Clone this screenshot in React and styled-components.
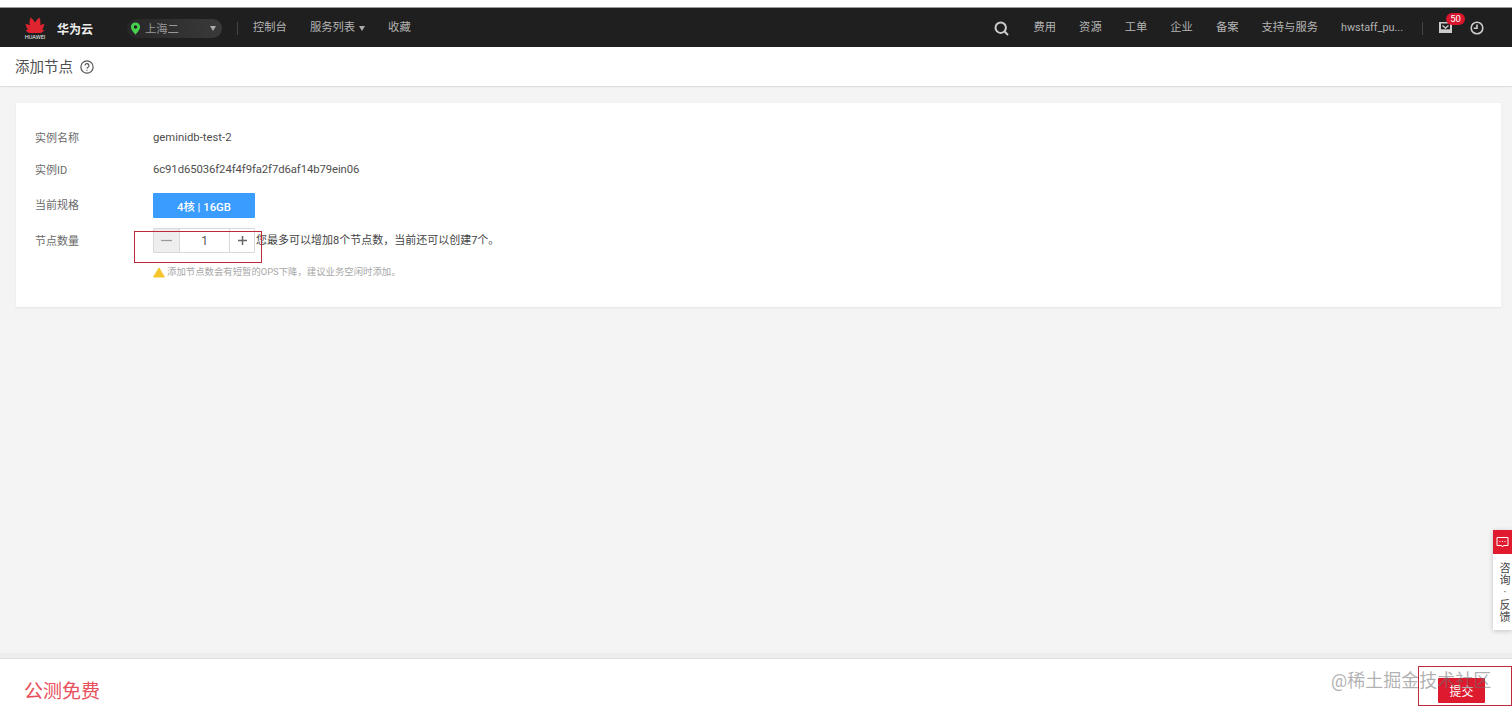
import React from "react";
import styled, { createGlobalStyle } from "styled-components";

const Global = createGlobalStyle`
  html, body { margin: 0; padding: 0; background: #fff; }
  body { font-family: Roboto, "Noto Sans CJK SC", "Liberation Sans", sans-serif; overflow: hidden; }
  * { box-sizing: border-box; }
`;
const Page = styled.div`
  position: relative; width: 1512px; height: 712px; display: flex; flex-direction: column; overflow: hidden; background: #f4f4f4;
`;
const TopStrip = styled.div`height: 8px; background: #fff; border-bottom: 1px solid #9a9a9a;`;
const Header = styled.header`
  height: 39px; background: #1f1f1f; display: flex; align-items: center; padding: 1px 28px 0 24px; color: #b4b4b4; font-size: 12px;
`;
const Brand = styled.div`display: flex; align-items: center; gap: 11px; width: 103px; color: #eee;`;
const LogoBox = styled.div`display: flex; flex-direction: column; align-items: center; width: 22px;`;
const LogoText = styled.span`font-size: 5.6px; line-height: 6px; color: #eee; margin-top: 1px; white-space: nowrap;`;
const BrandName = styled.span`font-size: 12px; font-weight: 700;`;
const Region = styled.div`
  width: 95px; height: 19px; border-radius: 10px; background: linear-gradient(90deg, #272727, #3a3a3a); display: flex; align-items: center; padding: 0 6px 0 3px; gap: 4px; color: #999;
`;
const RegionName = styled.span`flex: 1; font-size: 11.3px;`;
const Caret = styled.span`
  width: 0; height: 0; border-left: 3px solid transparent; border-right: 3px solid transparent; border-top: 5px solid ${p => p.$c || "#aaa"};
`;
const Sep = styled.span`width: 1px; height: 13px; background: #444; margin: ${p => p.$m};`;
const NavItem = styled.span`
  display: flex; align-items: center; gap: 4px; margin-right: ${p => p.$mr || 23}px; white-space: nowrap; font-size: 11.3px; line-height: 14px;
`;
const User = styled.span`margin-right: 19px; white-space: nowrap; font-size: 10.8px; line-height: 14px;`;
const Spacer = styled.div`flex: 1;`;
const IconWrap = styled.span`display: flex; position: relative; margin-right: ${p => p.$mr || 0}px; color: #ccc;`;
const Badge = styled.span`
  position: absolute; left: 7px; top: -9px; width: 19px; height: 12px; border-radius: 6px; background: #d8152d; color: #fff;
  font-size: 9.5px; line-height: 12px; text-align: center;
`;
const SubHeader = styled.div`
  height: 40px; background: #fff; border-bottom: 1px solid #dedede; display: flex; align-items: center; padding: 1px 15px 0; gap: 7px;
  color: #4f4f4f; box-shadow: 0 1px 2px rgba(0,0,0,.03);
`;
const Title = styled.h1`margin: 2px 0 0; font-size: 14.5px; font-weight: 400; line-height: 20px;`;
const Main = styled.main`flex: 1; padding: 16px 11px 0 16px;`;
const Card = styled.section`
  height: 204px; background: #fff; box-shadow: 0 1px 2px rgba(0,0,0,.06); padding: 19px 19px 0; display: flex; flex-direction: column;
`;
const Row = styled.div`display: flex; align-items: center; height: ${p => p.$h}px; margin-top: ${p => p.$mt || 0}px;`;
const Label = styled.span`width: 118px; flex: none; color: #6a6a6a; font-size: 11px; line-height: 16px; padding-top: ${p => p.$pt ?? 2}px;`;
const Value = styled.span`color: #4f4f4f; font-size: 11.3px; line-height: 16px; letter-spacing: ${p => p.$tight ? "-.08px" : "0"};`;
const Spec = styled.div`
  width: 102px; height: 25px; background: #3b9cff; border-radius: 1px; color: #fff; font-size: 11.3px; font-weight: 500;
  display: flex; align-items: center; justify-content: center;
`;
const Stepper = styled.div`width: 102px; height: 25px; border: 1px solid #d8d8d8; display: flex; flex: none; border-radius: 1px;`;
const StepBtn = styled.div`
  width: ${p => p.$w}px; display: flex; align-items: center; justify-content: center; background: ${p => p.$off ? "#eeeeee" : "#fff"}; color: ${p => p.$off ? "#999" : "#666"};
`;
const StepValue = styled.div`
  flex: 1; border-left: 1px solid #d8d8d8; border-right: 1px solid #d8d8d8; display: flex; align-items: center; justify-content: center; color: #555; font-size: 12px; padding-top: 1px;
`;
const Hint = styled.span`margin-left: 1px; color: #444; font-size: 11px; line-height: 16px; white-space: nowrap;`;
const Warn = styled.div`margin: 12px 0 0 118px; display: flex; align-items: center; gap: 2px; color: #a8a8a8; font-size: 9.4px; line-height: 14px;`;
const FooterBand = styled.div`height: 5px; background: #ededed;`;
const Footer = styled.footer`
  height: 54px; background: #fff; border-top: 1px solid #dfdfdf; display: flex; align-items: flex-start; justify-content: space-between; padding: 19px 27px 0 24px;
`;
const Promo = styled.span`color: #e8505b; font-size: 19px; line-height: 26px; padding-top: 1px;`;
const Submit = styled.button`
  width: 47px; height: 25px; border: 0; border-radius: 1px; background: #de1a2e; color: #fff; font: 12px Roboto, "Noto Sans CJK SC", sans-serif; padding: 0;
`;
const Mark = styled.div`position: absolute; border: 1px solid #c0283c; pointer-events: none; left: ${p => p.$l}px; top: ${p => p.$t}px; width: ${p => p.$w}px; height: ${p => p.$h}px;`;
const Watermark = styled.div`
  position: absolute; left: 1331px; top: 669px; color: rgba(110,110,110,.55); font-size: 18px; line-height: 24px; white-space: nowrap; pointer-events: none;
`;
const Float = styled.aside`
  position: absolute; left: 1493px; top: 530px; width: 19px; height: 100px; background: #fff; box-shadow: 0 1px 5px rgba(0,0,0,.2); display: flex; flex-direction: column;
`;
const FloatIcon = styled.div`height: 24px; background: #e01b2f; display: flex; align-items: center; justify-content: center; color: #fff;`;
const FloatText = styled.div`
  display: flex; flex-direction: column; align-items: center; padding: 9px 0 0 5px; color: #444; font-size: 11px; line-height: 12.2px;
`;

const petals = [[-72, .62], [-46, .82], [-16, 1], [16, 1], [46, .82], [72, .62]];
const Logo = () => (
  <svg width="22" height="16" viewBox="-11 -16 22 16">
    {petals.map(([a, s], i) => (
      <path key={i} d="M0 0C-4.2-4.5-3.8-11 0-16C3.8-11 4.2-4.5 0 0Z" fill="#e0242f" transform={`rotate(${a}) scale(${s})`} />
    ))}
  </svg>
);
const Pin = () => (
  <svg width="11" height="13" viewBox="0 0 11 13">
    <path d="M5.5 0.5a4.6 4.6 0 0 0-4.6 4.6c0 3.2 4.6 7.6 4.6 7.6s4.6-4.4 4.6-7.6A4.6 4.6 0 0 0 5.5.5z" fill="#47d14f" />
    <circle cx="5.5" cy="5" r="1.7" fill="#1f1f1f" />
  </svg>
);
const Search = () => (
  <svg width="15" height="15" viewBox="0 0 15 15" fill="none" stroke="currentColor" strokeWidth="2"><circle cx="6.7" cy="6.7" r="5.2" /><path d="M10.5 10.5l3.5 3.5" /></svg>
);
const Inbox = () => (
  <svg width="13" height="12" viewBox="0 0 13 12"><path d="M0 0h13v11H0z" fill="currentColor" /><path d="M2 1.5h9v5.8H2z" fill="#1f1f1f" /><path d="M3.5 3.5l3 2.5 3-2.5" fill="none" stroke="currentColor" strokeWidth="1.4" /></svg>
);
const Clock = () => (
  <svg width="14" height="14" viewBox="0 0 14 14" fill="none" stroke="currentColor" strokeWidth="1.6"><circle cx="7" cy="7" r="5.8" /><path d="M7 3.5V7.3H3.8" /></svg>
);
const Help = () => (
  <svg width="14" height="14" viewBox="0 0 13 13" fill="none" stroke="#555" strokeWidth="1.1"><circle cx="6.5" cy="6.5" r="5.7" /><path d="M4.7 5.1a1.8 1.8 0 1 1 2.7 1.6c-.6.3-.9.7-.9 1.3" /><path d="M6.5 9v1" /></svg>
);
const Minus = () => <svg width="11" height="11" viewBox="0 0 11 11" stroke="currentColor" strokeWidth="1.2"><path d="M0 5.5h11" /></svg>;
const Plus = () => <svg width="11" height="11" viewBox="0 0 11 11" stroke="currentColor" strokeWidth="1.5"><path d="M1 5.5h9M5.5 1v9" /></svg>;
const Triangle = () => <svg width="12" height="11" viewBox="0 0 12 11"><path d="M6 1L11.4 10H.6z" fill="#f5c52c" stroke="#f5c52c" strokeLinejoin="round" /></svg>;
const Chat = () => (
  <svg width="13" height="13" viewBox="0 0 13 13" fill="none" stroke="currentColor"><path d="M1 1.5h11v8H7.5l-1 1.5-1-1.5H1z" /><path d="M3.5 5.5h1M6 5.5h1M8.5 5.5h1" /></svg>
);

export default function App() {
  return (
    <Page>
      <Global />
      <TopStrip />
      <Header>
        <Brand>
          <LogoBox><Logo /><LogoText>HUAWEI</LogoText></LogoBox>
          <BrandName>华为云</BrandName>
        </Brand>
        <Region><Pin /><RegionName>上海二</RegionName><Caret /></Region>
        <Sep $m="0 15px 0 15px" />
        <NavItem>控制台</NavItem>
        <NavItem>服务列表 <Caret /></NavItem>
        <NavItem>收藏</NavItem>
        <Spacer />
        <IconWrap $mr={24}><Search /></IconWrap>
        <NavItem>费用</NavItem>
        <NavItem>资源</NavItem>
        <NavItem>工单</NavItem>
        <NavItem>企业</NavItem>
        <NavItem>备案</NavItem>
        <NavItem>支持与服务</NavItem>
        <User>hwstaff_pu...</User>
        <Sep $m="0 16px 0 0" />
        <IconWrap $mr={18}><Inbox /><Badge>50</Badge></IconWrap>
        <IconWrap><Clock /></IconWrap>
      </Header>
      <SubHeader><Title>添加节点</Title><Help /></SubHeader>
      <Main>
        <Card>
          <Row $h="32"><Label>实例名称</Label><Value>geminidb-test-2</Value></Row>
          <Row $h="32"><Label>实例ID</Label><Value $tight>6c91d65036f24f4f9fa2f7d6af14b79ein06</Value></Row>
          <Row $h="25" $mt="7"><Label $pt={0}>当前规格</Label><Spec>4核 | 16GB</Spec></Row>
          <Row $h="25" $mt="10">
            <Label>节点数量</Label>
            <Stepper>
              <StepBtn $w={25} $off><Minus /></StepBtn>
              <StepValue>1</StepValue>
              <StepBtn $w={24}><Plus /></StepBtn>
            </Stepper>
            <Hint>您最多可以增加8个节点数，当前还可以创建7个。</Hint>
          </Row>
          <Warn><Triangle />添加节点数会有短暂的OPS下降，建议业务空闲时添加。</Warn>
        </Card>
      </Main>
      <FooterBand />
      <Footer>
        <Promo>公测免费</Promo>
        <Submit>提交</Submit>
      </Footer>
      <Mark $l={134} $t={231} $w={128} $h={32} />
      <Mark $l={1418} $t={666} $w={94} $h={40} />
      <Watermark>@稀土掘金技术社区</Watermark>
      <Float>
        <FloatIcon><Chat /></FloatIcon>
        <FloatText><span>咨</span><span>询</span><span>·</span><span>反</span><span>馈</span></FloatText>
      </Float>
    </Page>
  );
}
